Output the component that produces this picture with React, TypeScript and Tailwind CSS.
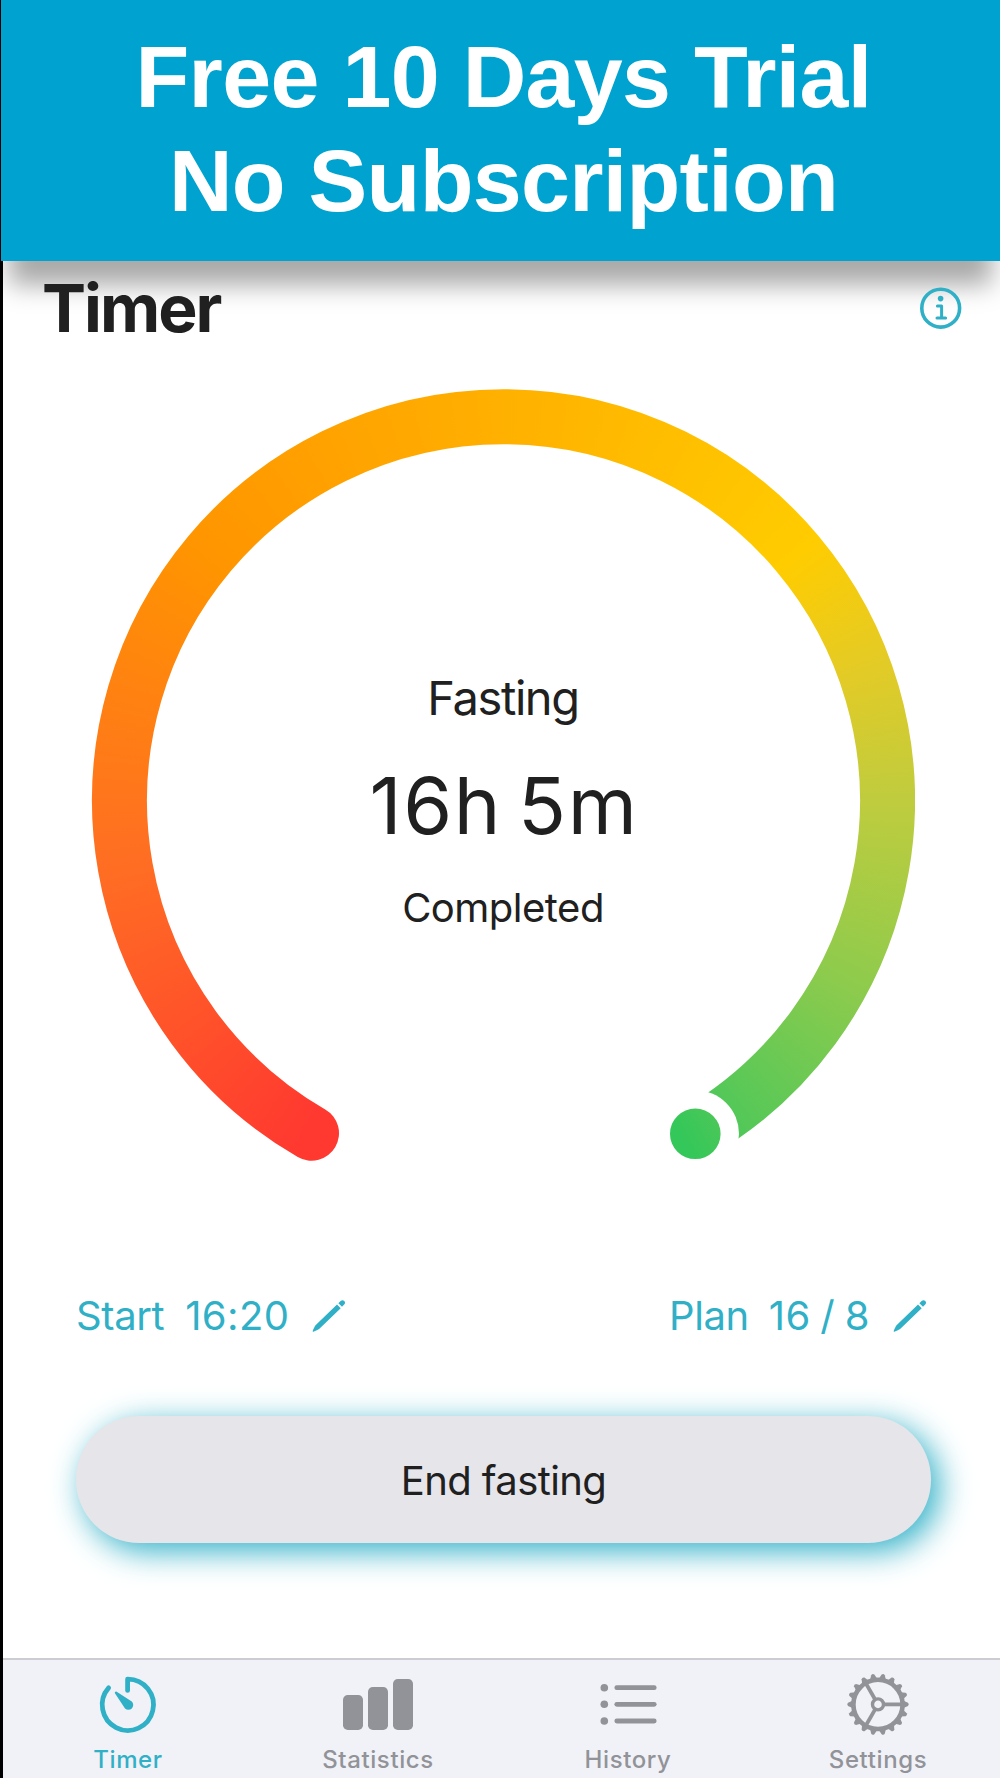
import React from "react";
import clsx from "clsx";

const TEETH = Array.from({ length: 18 }, (_, i) => i * 20);
const SPOKES = [0, 120, 240];

const InfoIcon = () => (
    <svg width={42} height={42} viewBox="0 0 42 42" fill="none">
        <circle cx={20.7} cy={21.2} r={18.9} stroke="currentColor" strokeWidth={3.6} />
        <circle cx={20.6} cy={11.6} r={2.8} fill="currentColor" />
        <path
            d="M17.4 18.9H21.6V31.1M17 31.1H25.6"
            stroke="currentColor"
            strokeWidth={3}
            strokeLinecap="round"
            strokeLinejoin="round"
        />
    </svg>
);

const PencilIcon = () => (
    <svg width={34} height={34} viewBox="0 0 34 34" fill="currentColor">
        <path d="M25 5.6L28.7 9.3L7.4 29.8C6.2 30.8 3.6 31.8 1.4 32.7C.8 32.9.5 32.6.7 32C1.5 29.8 2.7 27 3.8 25.9Z" />
        <path d="M26.4 4.3L28.6 2.1C29.8 .9 31.2 1 32.2 2C33.3 3.1 33.3 4.4 32.2 5.6L30 7.8Z" />
    </svg>
);

const TimerIcon = () => (
    <svg width={64} height={64} viewBox="0 0 64 64" fill="none">
        <path
            d="M31.6 18.4V7.2A25.6 25.6 0 1 1 12.6 15.9"
            stroke="currentColor"
            strokeWidth={4.8}
            strokeLinecap="round"
            strokeLinejoin="round"
        />
        <path
            d="M18.9 21.2C18.5 20.1 19.6 19.2 20.7 19.8L35.8 29.6A4.8 4.8 0 1 1 29 36.4Z"
            fill="currentColor"
        />
    </svg>
);

const StatisticsIcon = () => (
    <svg width={72} height={64} viewBox="0 0 72 64" fill="currentColor">
        <rect x={1} y={23} width={20} height={35} rx={4.8} />
        <rect x={26} y={15} width={20} height={43} rx={4.8} />
        <rect x={51} y={7} width={20} height={51} rx={4.8} />
    </svg>
);

const HistoryIcon = () => (
    <svg width={64} height={64} viewBox="0 0 64 64" fill="currentColor">
        {[15.7, 32.3, 49].map((y) => (
            <React.Fragment key={y}>
                <circle cx={8.3} cy={y} r={3.8} />
                <rect x={18.4} y={y - 2.4} width={42.2} height={4.8} rx={2.4} />
            </React.Fragment>
        ))}
    </svg>
);

const SettingsIcon = () => (
    <svg width={64} height={64} viewBox="0 0 64 64" fill="none">
        <g transform="translate(32 32.4)">
            <circle r={24.6} stroke="currentColor" strokeWidth={4.6} />
            <circle r={5.5} stroke="currentColor" strokeWidth={3.4} />
            {TEETH.map((angle) => (
                <path
                    key={angle}
                    d="M25 -3.8L30 -1.6Q31.6 0 30 1.6L25 3.8Z"
                    fill="currentColor"
                    transform={`rotate(${angle})`}
                />
            ))}
            {SPOKES.map((angle) => (
                <path
                    key={angle}
                    d="M6 0H24"
                    stroke="currentColor"
                    strokeWidth={3.8}
                    transform={`rotate(${angle})`}
                />
            ))}
        </g>
    </svg>
);

const ProgressRing = () => (
    <svg
        width={824}
        height={824}
        viewBox="0 0 824 824"
        className="col-start-1 row-start-1"
    >
        <mask id="ring" maskUnits="userSpaceOnUse" x={0} y={0} width={824} height={824}>
            <path
                d="M220.5 744.2A384 384 0 1 1 604.5 744.2"
                fill="none"
                stroke="white"
                strokeWidth={55}
                strokeLinecap="round"
            />
            <circle cx={604.3} cy={744.8} r={43.7} fill="black" />
            <circle cx={604.3} cy={744.8} r={25.3} fill="white" />
        </mask>
        <foreignObject width={824} height={824} mask="url(#ring)">
            <div className="h-[824px] w-[824px] bg-[conic-gradient(from_210deg,#ff3830_0deg,#ff6d23_50deg,#ff9500_100deg,#ffcc00_200deg,#e3cb26_220deg,#bfcc3e_240deg,#8fcb4c_267deg,#55c858_293deg,#34c759_302deg,#34c759_330deg,#ff3830_330deg)]" />
        </foreignObject>
    </svg>
);

interface EditableProps {
    label: string;
    value: string;
    className?: string;
    valueClassName?: string;
}

const Editable: React.FC<EditableProps> = ({
    label,
    value,
    className,
    valueClassName,
}) => (
    <button className={clsx("flex items-center whitespace-nowrap", className)}>
        <span>{label}</span>
        <span className={valueClassName}>{value}</span>
        <span className="ml-auto">
            <PencilIcon />
        </span>
    </button>
);

const TABS = [
    { label: "Timer", icon: <TimerIcon />, active: true },
    { label: "Statistics", icon: <StatisticsIcon /> },
    { label: "History", icon: <HistoryIcon /> },
    { label: "Settings", icon: <SettingsIcon /> },
];

export default function App() {
    return (
        <div className="flex h-[1778px] w-[1000px] flex-col overflow-hidden bg-black font-['Inter',sans-serif] text-[#202020]">
            <header className="z-10 ml-px h-[261px] shrink-0 bg-[#00a3cf] pt-[25px] pl-[6px] text-center font-['Liberation_Sans',sans-serif] text-[88px] leading-[104px] font-bold text-white shadow-[0_32px_24px_-8px_rgba(0,0,0,0.34)]">
                <p className="tracking-[-0.7px]">Free 10 Days Trial</p>
                <p className="tracking-[-0.7px]">No Subscription</p>
            </header>

            <main className="ml-[3px] flex flex-1 flex-col bg-white">
                <div className="z-20 flex items-center justify-between pt-[14px] pr-[38px] pl-[39px]">
                    <h1 className="text-[66px] leading-[66px] font-bold tracking-[-2px]">
                        Timer
                    </h1>
                    <button className="text-[#30b0c7]">
                        <InfoIcon />
                    </button>
                </div>

                <section className="mt-[48px] ml-[88px] grid h-[824px] w-[824px]">
                    <ProgressRing />
                    <div className="col-start-1 row-start-1 flex flex-col items-center pt-[285px]">
                        <p className="text-[47px] leading-[48px] tracking-[-1.4px]">
                            Fasting
                        </p>
                        <p className="mt-[43px] pl-[2px] text-[79px] leading-[80px] tracking-[1.6px] [word-spacing:-8px]">
                            16h 5m
                        </p>
                        <p className="mt-[43px] text-[40px] leading-[40px] tracking-[-0.5px]">
                            Completed
                        </p>
                    </div>
                </section>

                <div className="mt-[83px] flex justify-between pr-[73px] pl-[73px] text-[40px] leading-[40px] tracking-[-0.4px] text-[#30b0c7]">
                    <Editable
                        label="Start"
                        value="16:20"
                        className="w-[270px]"
                        valueClassName="ml-[21px] tracking-[0.4px]"
                    />
                    <Editable
                        label="Plan"
                        value="16 / 8"
                        className="w-[258px]"
                        valueClassName="ml-[20px] tracking-[0.4px] [word-spacing:-2px]"
                    />
                </div>

                <button className="mt-[80px] ml-[73px] h-[127px] w-[855px] rounded-[63px] bg-[#e5e5ea] pt-[2px] text-[40px] leading-[40px] tracking-[-0.6px] shadow-[8px_8px_32px_#30b0c7]">
                    End fasting
                </button>

                <nav className="mt-auto flex h-[120px] border-t-2 border-[#cdccd2] bg-[#f1f2f7]">
                    {TABS.map(({ label, icon, active }) => (
                        <button
                            key={label}
                            className={clsx(
                                "flex w-[250px] shrink-0 flex-col items-center pt-[12px]",
                                active ? "text-[#30b0c7]" : "text-[#919399]"
                            )}
                        >
                            {icon}
                            <span className="mt-[12px] text-[24px] leading-[24px] font-medium tracking-[0.6px]">
                                {label}
                            </span>
                        </button>
                    ))}
                </nav>
            </main>
        </div>
    );
}
